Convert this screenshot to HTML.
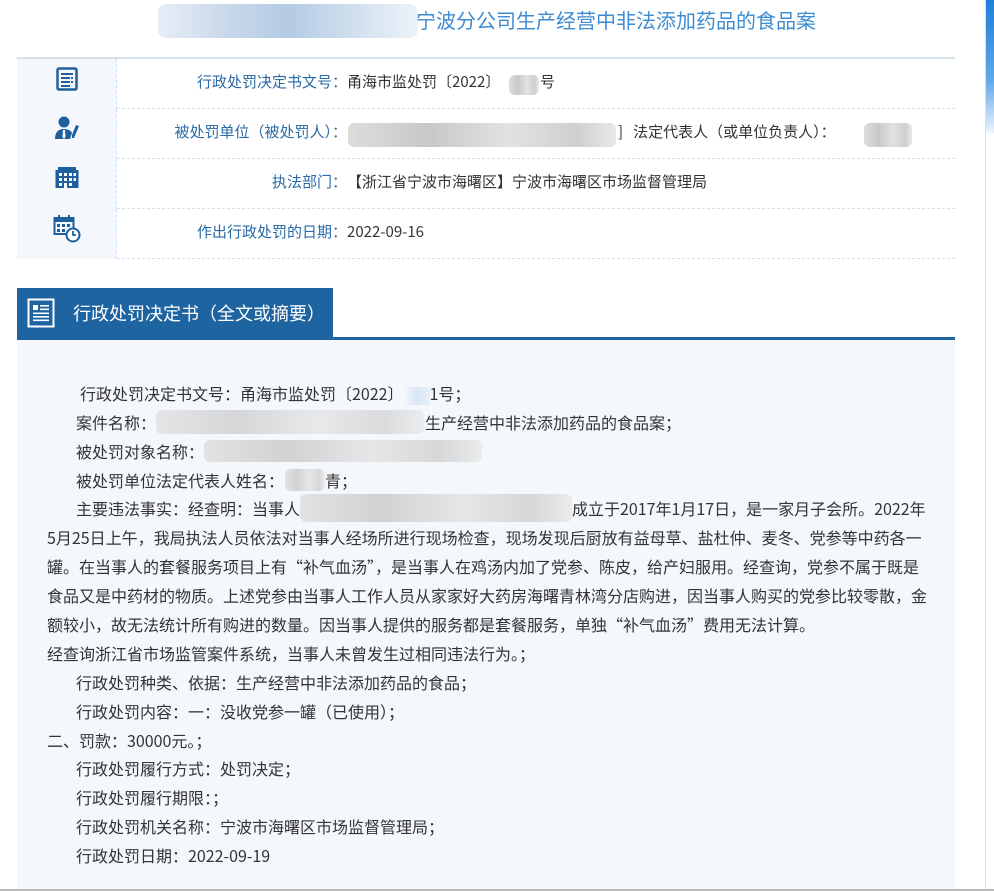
<!DOCTYPE html>
<html><head><meta charset="utf-8"><style>
*{margin:0;padding:0;box-sizing:border-box}
body{width:994px;height:891px;background:#fff;font-family:"Noto Sans CJK SC","Liberation Sans",sans-serif;position:relative;overflow:hidden;color:#333}
.abs{position:absolute}
.blur{position:absolute;border-radius:6px;background:linear-gradient(90deg,#ddd,#c8c8c8 30%,#e2e2e2 60%,#cfcfcf 85%,#e8e8e8)}
.bblur{position:absolute;border-radius:8px;background:linear-gradient(90deg,#e6edf6,#c5d6ea 30%,#b4cbe4 50%,#d0dfee 75%,#eef3f9)}
.tbl{left:17px;top:57px;width:938px;height:200px;border-top:2px solid #d6e2ea}
.row{position:absolute;left:0;width:938px;height:50px;border-bottom:1px dashed #d2e2f0}
.ic{position:absolute;left:0;top:0;width:100px;height:50px;background:#f4f8fd;border-right:1px dashed #cfe0f0}
.lab{position:absolute;right:608px;top:13px;font-size:15px;line-height:20px;color:#2a6aa8;white-space:nowrap}
.val{position:absolute;left:330px;top:13px;font-size:15px;line-height:20px;color:#333;white-space:nowrap}
.hd{left:17px;top:288px;width:316px;height:51px;background:#1e64a0;color:#fff;font-size:18px}
.line{left:17px;top:337px;width:938px;height:3px;background:#1e64a0}
.panel{left:17px;top:340px;width:938px;height:551px;background:#f4f8fc}
.t{position:absolute;font-size:16px;color:#333;white-space:nowrap;line-height:20px}
</style></head><body>
<div class="bblur" style="left:158px;top:4px;width:260px;height:34px"></div>
<div class="abs" style="left:416px;top:6px;font-size:20px;line-height:28px;color:#3d8bd2;white-space:nowrap">宁波分公司生产经营中非法添加药品的食品案</div>

<div class="abs tbl">
 <div class="row" style="top:0">
  <div class="ic"><svg style="position:absolute;left:39px;top:8px" width="22" height="24" viewBox="0 0 22 24"><rect x="1.5" y="1.5" width="19" height="21" rx="1.5" fill="none" stroke="#1e5f9c" stroke-width="2.5"/><rect x="5" y="6" width="12" height="2" fill="#1e5f9c"/><rect x="5" y="10" width="9" height="2" fill="#1e5f9c"/><rect x="15" y="10" width="2" height="2" fill="#1e5f9c"/><rect x="5" y="14" width="9" height="2" fill="#1e5f9c"/><rect x="15" y="14" width="2" height="2" fill="#1e5f9c"/><rect x="5" y="18" width="9" height="2" fill="#1e5f9c"/></svg></div>
  <div class="lab">行政处罚决定书文号：</div><div class="val">甬海市监处罚〔2022〕</div><div class="blur" style="left:492px;top:16px;width:30px;height:20px"></div><div class="val" style="left:523px">号</div>
 </div>
 <div class="row" style="top:50px">
  <div class="ic"><svg style="position:absolute;left:37px;top:6px" width="26" height="26" viewBox="0 0 26 26"><circle cx="10" cy="7" r="5.5" fill="#1e5f9c"/><path d="M1 24 Q1 14 10 14 Q16 14 18 18 L16 24 Z" fill="#1e5f9c"/><path d="M9 15 L11 15 L11.5 22 L10 24 L8.5 22Z" fill="#fff"/><path d="M22 10 L25 11 L20 23 L18 23 L18 20 Z" fill="#1e5f9c"/></svg></div>
  <div class="lab">被处罚单位（被处罚人）：</div><div class="blur" style="left:331px;top:14px;width:268px;height:24px"></div><div class="val" style="left:601px">]&nbsp;&nbsp;&nbsp;法定代表人（或单位负责人）：</div><div class="blur" style="left:847px;top:14px;width:48px;height:24px"></div>
 </div>
 <div class="row" style="top:100px">
  <div class="ic"><svg style="position:absolute;left:37px;top:8px" width="26" height="22" viewBox="0 0 26 22"><rect x="1.5" y="3" width="23" height="18" fill="#1e5f9c"/><rect x="4" y="0" width="18" height="4" fill="#1e5f9c"/><g fill="#fff"><rect x="5" y="6" width="3" height="3"/><rect x="10" y="6" width="3" height="3"/><rect x="15" y="6" width="3" height="3"/><rect x="19.5" y="6" width="2.5" height="3"/><rect x="5" y="11" width="3" height="3"/><rect x="10" y="11" width="3" height="3"/><rect x="15" y="11" width="3" height="3"/><rect x="19.5" y="11" width="2.5" height="3"/><rect x="5" y="16" width="3" height="3"/><rect x="10" y="16" width="3" height="5"/><rect x="15" y="16" width="3" height="3"/></g></svg></div>
  <div class="lab">执法部门：</div><div class="val">【浙江省宁波市海曙区】宁波市海曙区市场监督管理局</div>
 </div>
 <div class="row" style="top:150px">
  <div class="ic"><svg style="position:absolute;left:36px;top:6px" width="28" height="28" viewBox="0 0 28 28"><rect x="1.5" y="3" width="19" height="16" fill="none" stroke="#1e5f9c" stroke-width="2"/><rect x="1.5" y="3" width="19" height="4" fill="#1e5f9c"/><rect x="5" y="0" width="2" height="5" fill="#1e5f9c"/><rect x="15" y="0" width="2" height="5" fill="#1e5f9c"/><g fill="#1e5f9c"><rect x="4" y="9" width="3" height="3"/><rect x="9" y="9" width="3" height="3"/><rect x="14" y="9" width="3" height="3"/><rect x="4" y="14" width="3" height="3"/><rect x="9" y="14" width="3" height="3"/></g><circle cx="20" cy="20" r="6.5" fill="#fff" stroke="#1e5f9c" stroke-width="2"/><path d="M20 16 V20 H23" fill="none" stroke="#1e5f9c" stroke-width="1.8"/></svg></div>
  <div class="lab">作出行政处罚的日期：</div><div class="val">2022-09-16</div>
 </div>
</div>

<div class="abs hd"><svg style="position:absolute;left:10px;top:10px" width="28" height="30" viewBox="0 0 28 30"><rect x="1.5" y="1.5" width="25" height="27" fill="none" stroke="#fff" stroke-width="2"/><g fill="#fff"><rect x="6" y="7" width="5" height="5"/><rect x="13" y="7" width="9" height="1.6"/><rect x="13" y="10.5" width="9" height="1.6"/><rect x="6" y="14.5" width="16" height="1.6"/><rect x="6" y="18" width="16" height="1.6"/><rect x="6" y="21.5" width="16" height="1.6"/></g></svg><div style="position:absolute;left:56px;top:12px;line-height:26px;white-space:nowrap">行政处罚决定书（全文或摘要）</div></div>
<div class="abs line"></div>
<div class="abs panel"></div>

<div class="t" style="left:80px;top:383px">行政处罚决定书文号：甬海市监处罚〔2022〕<span style="display:inline-block;width:26px;height:18px;vertical-align:middle;background:linear-gradient(90deg,#f4f8fc,#d8e6f6,#e8f0fa)"></span>1号；</div>
<div class="t" style="left:76px;top:412px">案件名称：</div><div class="blur" style="left:156px;top:410px;width:268px;height:24px;opacity:.7"></div><div class="t" style="left:425px;top:412px">生产经营中非法添加药品的食品案；</div>
<div class="t" style="left:76px;top:441px">被处罚对象名称：</div><div class="blur" style="left:204px;top:440px;width:278px;height:22px;opacity:.8"></div>
<div class="t" style="left:76px;top:470px">被处罚单位法定代表人姓名：</div><div class="blur" style="left:285px;top:469px;width:40px;height:22px;opacity:.8"></div><div class="t" style="left:325px;top:470px">青；</div>
<div class="t" style="left:76px;top:498px">主要违法事实：经查明：当事人</div><div class="blur" style="left:300px;top:494px;width:272px;height:28px;opacity:.8"></div><div class="t" style="left:572px;top:498px">成立于2017年1月17日，是一家月子会所。2022年</div>
<div class="t" style="left:47px;top:527px">5月25日上午，我局执法人员依法对当事人经场所进行现场检查，现场发现后厨放有益母草、盐杜仲、麦冬、党参等中药各一</div>
<div class="t" style="left:47px;top:556px">罐。在当事人的套餐服务项目上有“补气血汤”，是当事人在鸡汤内加了党参、陈皮，给产妇服用。经查询，党参不属于既是</div>
<div class="t" style="left:47px;top:585px">食品又是中药材的物质。上述党参由当事人工作人员从家家好大药房海曙青林湾分店购进，因当事人购买的党参比较零散，金</div>
<div class="t" style="left:47px;top:614px">额较小，故无法统计所有购进的数量。因当事人提供的服务都是套餐服务，单独“补气血汤”费用无法计算。</div>
<div class="t" style="left:47px;top:643px">经查询浙江省市场监管案件系统，当事人未曾发生过相同违法行为。；</div>
<div class="t" style="left:76px;top:672px">行政处罚种类、依据：生产经营中非法添加药品的食品；</div>
<div class="t" style="left:76px;top:701px">行政处罚内容：一：没收党参一罐（已使用）；</div>
<div class="t" style="left:47px;top:730px">二、罚款：30000元。；</div>
<div class="t" style="left:76px;top:758px">行政处罚履行方式：处罚决定；</div>
<div class="t" style="left:76px;top:787px">行政处罚履行期限：；</div>
<div class="t" style="left:76px;top:816px">行政处罚机关名称：宁波市海曙区市场监督管理局；</div>
<div class="t" style="left:76px;top:845px">行政处罚日期：2022-09-19</div>

<div class="abs" style="left:985px;top:0;width:1px;height:891px;background:#ddd"></div>
<div class="abs" style="left:986px;top:0;width:8px;height:133px;background:linear-gradient(#1e7fd8,#5fa8e8 60%,#eef4fb)"></div>
<div class="abs" style="left:0;top:889px;width:994px;height:2px;background:#bbb"></div>
</body></html>
